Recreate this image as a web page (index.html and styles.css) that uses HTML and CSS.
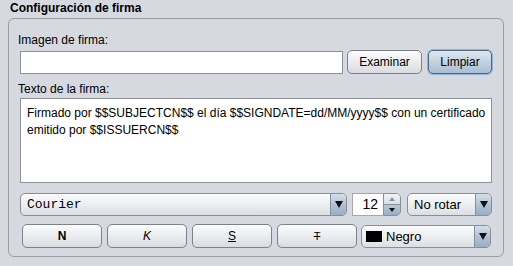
FILE: index.html
```html
<!DOCTYPE html>
<html lang="es">
<head>
  <meta charset="UTF-8">
  <title>Configuración de firma</title>
  <link rel="stylesheet" href="styles.css">
</head>
<body>
  <!-- Group title -->
  <h3 class="group-title">Configuración de firma</h3>

  <div class="group-panel">
    <!-- Signature image -->
    <label class="field-label">Imagen de firma:</label>
    <div class="image-row">
      <input type="text" class="text-field image-path">
      <button class="btn btn-examine">Examinar</button>
      <button class="btn btn-clear">Limpiar</button>
    </div>

    <!-- Signature text -->
    <label class="field-label label-text">Texto de la firma:</label>
    <div class="text-area">Firmado por $$SUBJECTCN$$ el día $$SIGNDATE=dd/MM/yyyy$$ con un certificado<br>emitido por $$ISSUERCN$$</div>

    <!-- Font, size and rotation -->
    <div class="font-row">
      <div class="combo combo-font">
        <span class="combo-value mono">Courier</span>
        <span class="combo-arrow"><span class="tri"></span></span>
      </div>
      <div class="spinner">
        <span class="spinner-value">12</span>
        <span class="spinner-buttons">
          <span class="spin-up"><span class="tri-up"></span></span>
          <span class="spin-down"><span class="tri tri-small"></span></span>
        </span>
      </div>
      <div class="combo combo-rotate">
        <span class="combo-value">No rotar</span>
        <span class="combo-arrow"><span class="tri"></span></span>
      </div>
    </div>

    <!-- Style buttons and colour -->
    <div class="style-row">
      <button class="btn btn-style"><b>N</b></button>
      <button class="btn btn-style"><i>K</i></button>
      <button class="btn btn-style"><u>S</u></button>
      <button class="btn btn-style"><s class="strike">T</s></button>
      <div class="combo combo-color">
        <span class="combo-value"><span class="swatch"></span>Negro</span>
        <span class="combo-arrow"><span class="tri"></span></span>
      </div>
    </div>
  </div>
</body>
</html>
```

FILE: styles.css
```css
/* Basic reset */
body, h3, div, input, button, label {
  margin: 0;
  padding: 0;
  box-sizing: border-box;
}

body {
  font-family: "Liberation Sans", Arial, sans-serif;
  font-size: 12px;
  color: #000;
  background-color: #d6d9df;
  width: 513px;
  height: 266px;
  overflow: hidden;
}

/* Titled border */
.group-title {
  font-size: 12px;
  font-weight: bold;
  line-height: 15px;
  padding: 1px 0 0 10px;
  height: 18px;
}

.group-panel {
  margin-left: 8px;
  width: 496px;
  height: 239px;
  border: 1px solid #9a9ea5;
  border-radius: 6px;
  padding: 14px 11px 0 11px;
  display: flex;
  flex-direction: column;
}

.group-panel > * {
  flex-shrink: 0;
}

.field-label {
  display: block;
  line-height: 15px;
  height: 15px;
  margin-left: -2px;
}

.label-text {
  margin-top: 8px;
}

/* Image row */
.image-row {
  display: flex;
  align-items: center;
  margin-top: 2px;
  height: 24px;
}

.text-field {
  height: 23px;
  border: 1px solid #8e9298;
  background: #fff;
  font: inherit;
}

.image-path {
  width: 323px;
}

.btn {
  font-family: inherit;
  font-size: 12px;
  color: #000;
  height: 24px;
  border: 1px solid #7d828a;
  border-radius: 5px;
  background: linear-gradient(#fbfbfc, #eceef1 45%, #d9dce1);
  cursor: pointer;
}

.btn-examine {
  width: 75px;
  margin-left: 4px;
}

.btn-clear {
  width: 64px;
  margin-left: 6px;
  border-color: #4e6984;
  background: linear-gradient(#dfe7ef, #c3d2e1 50%, #a9bdd2);
  box-shadow: 0 0 0 1px #8fb3d6;
}

.text-area {
  margin-top: 1px;
  height: 85px;
  border: 1px solid #8e9298;
  background: #fff;
  padding: 6px 6px;
  font-size: 12px;
  line-height: 17px;
  white-space: nowrap;
  overflow: hidden;
}

/* Combos and spinner */
.font-row {
  display: flex;
  margin-top: 10px;
  height: 23px;
}

.combo {
  display: flex;
  height: 23px;
  border: 1px solid #8a8e96;
  border-radius: 5px;
  background: linear-gradient(#fbfbfc, #eceef1 50%, #dcdfe4);
  overflow: hidden;
}

.combo-value {
  flex: 1;
  display: flex;
  align-items: center;
  padding-left: 6px;
  font-size: 13px;
}

.mono {
  font-family: "Liberation Mono", "Courier New", monospace;
  font-size: 13px;
}

.combo-arrow {
  width: 15px;
  border-left: 1px solid #8a8e96;
  background: linear-gradient(#d5dee8, #b2c3d5 50%, #98aec5);
  display: flex;
  align-items: center;
  justify-content: center;
}

.tri {
  width: 0;
  height: 0;
  border-left: 4px solid transparent;
  border-right: 4px solid transparent;
  border-top: 7px solid #111;
}

.tri-small {
  border-left-width: 3px;
  border-right-width: 3px;
  border-top-width: 4px;
}

.tri-up {
  width: 0;
  height: 0;
  border-left: 3px solid transparent;
  border-right: 3px solid transparent;
  border-bottom: 4px solid #9097a0;
}

.combo-font {
  width: 327px;
}

.spinner {
  display: flex;
  width: 49px;
  margin-left: 5px;
  height: 23px;
}

.spinner-value {
  flex: 1;
  background: #fff;
  border: 1px solid #a4a8ae;
  border-right: none;
  text-align: right;
  padding-right: 5px;
  font-size: 14px;
  line-height: 21px;
}

.spinner-buttons {
  width: 16px;
  display: flex;
  flex-direction: column;
  border: 1px solid #8a8e96;
  border-radius: 0 5px 5px 0;
  overflow: hidden;
}

.spin-up, .spin-down {
  flex: 1;
  display: flex;
  align-items: center;
  justify-content: center;
}

.spin-up {
  background: linear-gradient(#f2f4f6, #d9dee5);
  border-bottom: 1px solid #8a8e96;
}

.spin-down {
  background: linear-gradient(#b8c8d8, #98aec5);
}

.combo-rotate {
  width: 85px;
  margin-left: 6px;
}

/* Style buttons */
.style-row {
  display: flex;
  margin-top: 8px;
  padding-left: 2px;
  height: 24px;
}

.btn-style {
  width: 80px;
  margin-right: 5px;
  height: 24px;
}

.btn-style:nth-child(4) {
  margin-right: 4px;
}

.strike {
  font-size: 11px;
}

.combo-color {
  width: 130px;
  margin-top: 1px;
}

.swatch {
  display: inline-block;
  width: 16px;
  height: 11px;
  background: #000;
  margin-right: 4px;
  margin-left: -2px;
}
```
